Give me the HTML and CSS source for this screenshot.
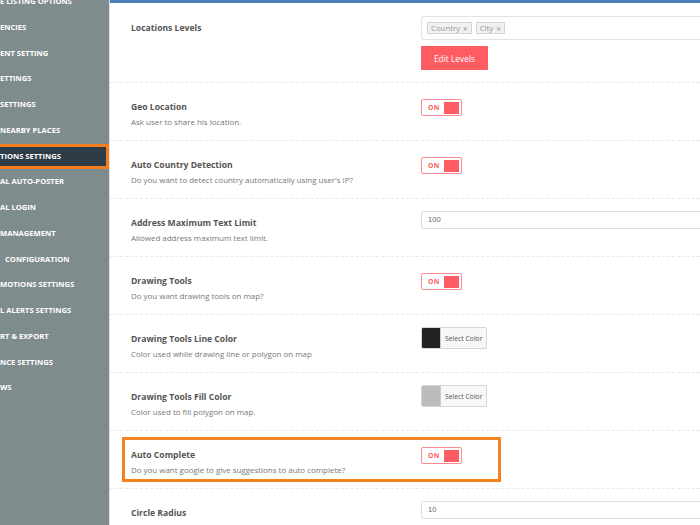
FILE: index.html
```html
<!DOCTYPE html>
<html>
<head>
<meta charset="utf-8">
<link rel="stylesheet" href="styles.css">
</head>
<body>
<div class="page">
  <aside class="sidebar">
    <ul class="menu">
      <li>E LISTING OPTIONS</li>
      <li>ENCIES</li>
      <li>ENT SETTING</li>
      <li>ETTINGS</li>
      <li>SETTINGS</li>
      <li>NEARBY PLACES</li>
      <li class="active">TIONS SETTINGS</li>
      <li>AL AUTO-POSTER</li>
      <li>AL LOGIN</li>
      <li>MANAGEMENT</li>
      <li class="indent">CONFIGURATION</li>
      <li>MOTIONS SETTINGS</li>
      <li>L ALERTS SETTINGS</li>
      <li>RT &amp; EXPORT</li>
      <li>NCE SETTINGS</li>
      <li>WS</li>
    </ul>
  </aside>
  <main class="main">
    <div class="row first">
      <div class="info">
        <div class="label">Locations Levels</div>
      </div>
      <div class="control">
        <div class="tagbox">
          <span class="tag">Country <b>×</b></span>
          <span class="tag">City <b>×</b></span>
        </div>
        <button class="btn">Edit Levels</button>
      </div>
    </div>
    <div class="row">
      <div class="info">
        <div class="label">Geo Location</div>
        <div class="desc">Ask user to share his location.</div>
      </div>
      <div class="control"><div class="toggle"><span>ON</span><i></i></div></div>
    </div>
    <div class="row">
      <div class="info">
        <div class="label">Auto Country Detection</div>
        <div class="desc">Do you want to detect country automatically using user's IP?</div>
      </div>
      <div class="control"><div class="toggle"><span>ON</span><i></i></div></div>
    </div>
    <div class="row">
      <div class="info">
        <div class="label">Address Maximum Text Limit</div>
        <div class="desc">Allowed address maximum text limit.</div>
      </div>
      <div class="control"><div class="input">100</div></div>
    </div>
    <div class="row">
      <div class="info">
        <div class="label">Drawing Tools</div>
        <div class="desc">Do you want drawing tools on map?</div>
      </div>
      <div class="control"><div class="toggle"><span>ON</span><i></i></div></div>
    </div>
    <div class="row">
      <div class="info">
        <div class="label">Drawing Tools Line Color</div>
        <div class="desc">Color used while drawing line or polygon on map</div>
      </div>
      <div class="control"><div class="picker"><i class="swatch dark"></i><span>Select Color</span></div></div>
    </div>
    <div class="row">
      <div class="info">
        <div class="label">Drawing Tools Fill Color</div>
        <div class="desc">Color used to fill polygon on map.</div>
      </div>
      <div class="control"><div class="picker"><i class="swatch light"></i><span>Select Color</span></div></div>
    </div>
    <div class="row marked">
      <div class="info">
        <div class="label">Auto Complete</div>
        <div class="desc">Do you want google to give suggestions to auto complete?</div>
      </div>
      <div class="control"><div class="toggle"><span>ON</span><i></i></div></div>
      <div class="highlight"></div>
    </div>
    <div class="row">
      <div class="info">
        <div class="label">Circle Radius</div>
        <div class="desc">Set the map circle radius value here.</div>
      </div>
      <div class="control"><div class="input">10</div></div>
    </div>
  </main>
</div>
</body>
</html>
```
FILE: styles.css
```css
* { box-sizing: border-box; }
html, body { margin: 0; padding: 0; }
body {
  width: 700px;
  height: 525px;
  overflow: hidden;
  font-family: "Open Sans", "Liberation Sans", sans-serif;
  background: #fff;
}
.page {
  display: flex;
  height: 525px;
}
.sidebar {
  width: 110px;
  flex: none;
  background: #7f8c8d;
  border-right: 1px solid #dde1e1;
  overflow: hidden;
}
.menu {
  list-style: none;
  margin: -11px 0 0 0;
  padding: 0;
}
.menu li {
  height: 25.75px;
  line-height: 25.75px;
  color: #fff;
  font-size: 7.6px;
  font-weight: 700;
  white-space: nowrap;
  padding-left: 0;
}
.menu li.indent { padding-left: 5px; }
.menu li.active {
  background: #2e3c48;
  border: 3px solid #f47d20;
  border-left: none;
  line-height: 19.75px;
  width: 109px;
}
.main {
  flex: 1;
  border-top: 3px solid #4b7fb6;
  overflow: hidden;
}
.row {
  position: relative;
  display: grid;
  grid-template-columns: 290px 1fr;
  padding-left: 21px;
  border-bottom: 1px dashed #e8e8e8;
}
.info { padding: 17px 0 12px; }
.row.first .info { padding-top: 18px; }
.label {
  font-size: 8.6px;
  font-weight: 700;
  color: #555;
  line-height: 14px;
}
.desc {
  font-size: 7.95px;
  color: #777;
  line-height: 14px;
  padding-top: 1px;
  margin-bottom: -1px;
}
.control { padding-top: 12px; }
.row.first .control { padding-top: 13px; padding-bottom: 12px; }
.tagbox {
  height: 24px;
  border: 1px solid #e2e2e2;
  border-right: none;
  border-radius: 3px 0 0 3px;
  padding: 5px 5px;
  display: flex;
  gap: 4px;
  align-items: center;
}
.tag {
  display: inline-flex;
  align-items: center;
  height: 12px;
  padding: 0 3px;
  background: #f1f1f1;
  border: 1px solid #d3d3d3;
  color: #999;
  font-size: 7.8px;
  gap: 3px;
}
.tag b { font-weight: 700; font-size: 8px; color: #aaa; }
.btn {
  display: block;
  margin-top: 6px;
  width: 67px;
  height: 24px;
  border: none;
  border-radius: 1px;
  background: #fd5c63;
  color: #fff;
  font-family: "Open Sans", "Liberation Sans", sans-serif;
  font-size: 8.4px;
  padding: 0;
}
.toggle {
  margin-top: 4px;
  width: 41px;
  height: 17px;
  border: 1px solid #fb8b90;
  border-radius: 2px;
  background: #fff;
  display: flex;
  align-items: center;
  justify-content: space-between;
  padding: 0 2px 0 6px;
}
.toggle span {
  color: #fd5c63;
  font-size: 6.8px;
  font-weight: 700;
  letter-spacing: 0.3px;
}
.toggle i {
  display: block;
  width: 15px;
  height: 12px;
  background: #fd5c63;
}
.input {
  height: 18px;
  border: 1px solid #dedede;
  border-right: none;
  border-radius: 3px 0 0 3px;
  font-size: 7.6px;
  color: #666;
  line-height: 16px;
  padding-left: 6px;
  font-family: "Liberation Sans", Arial, sans-serif;
}
.picker {
  display: inline-flex;
  align-items: stretch;
  height: 22px;
  border: 1px solid #d6d6d6;
  border-radius: 2px;
  background: #f7f7f7;
  overflow: hidden;
}
.swatch {
  display: block;
  width: 19px;
  border-right: 1px solid #ccc;
}
.swatch.dark { background: #222; }
.swatch.light { background: #bbb; }
.picker span {
  display: flex;
  align-items: center;
  padding: 0 4px 0 4px;
  font-size: 6.8px;
  color: #555;
}
.highlight {
  position: absolute;
  left: 12px;
  top: 6px;
  width: 379px;
  height: 45px;
  border: 3px solid #f58220;
  pointer-events: none;
}
```
